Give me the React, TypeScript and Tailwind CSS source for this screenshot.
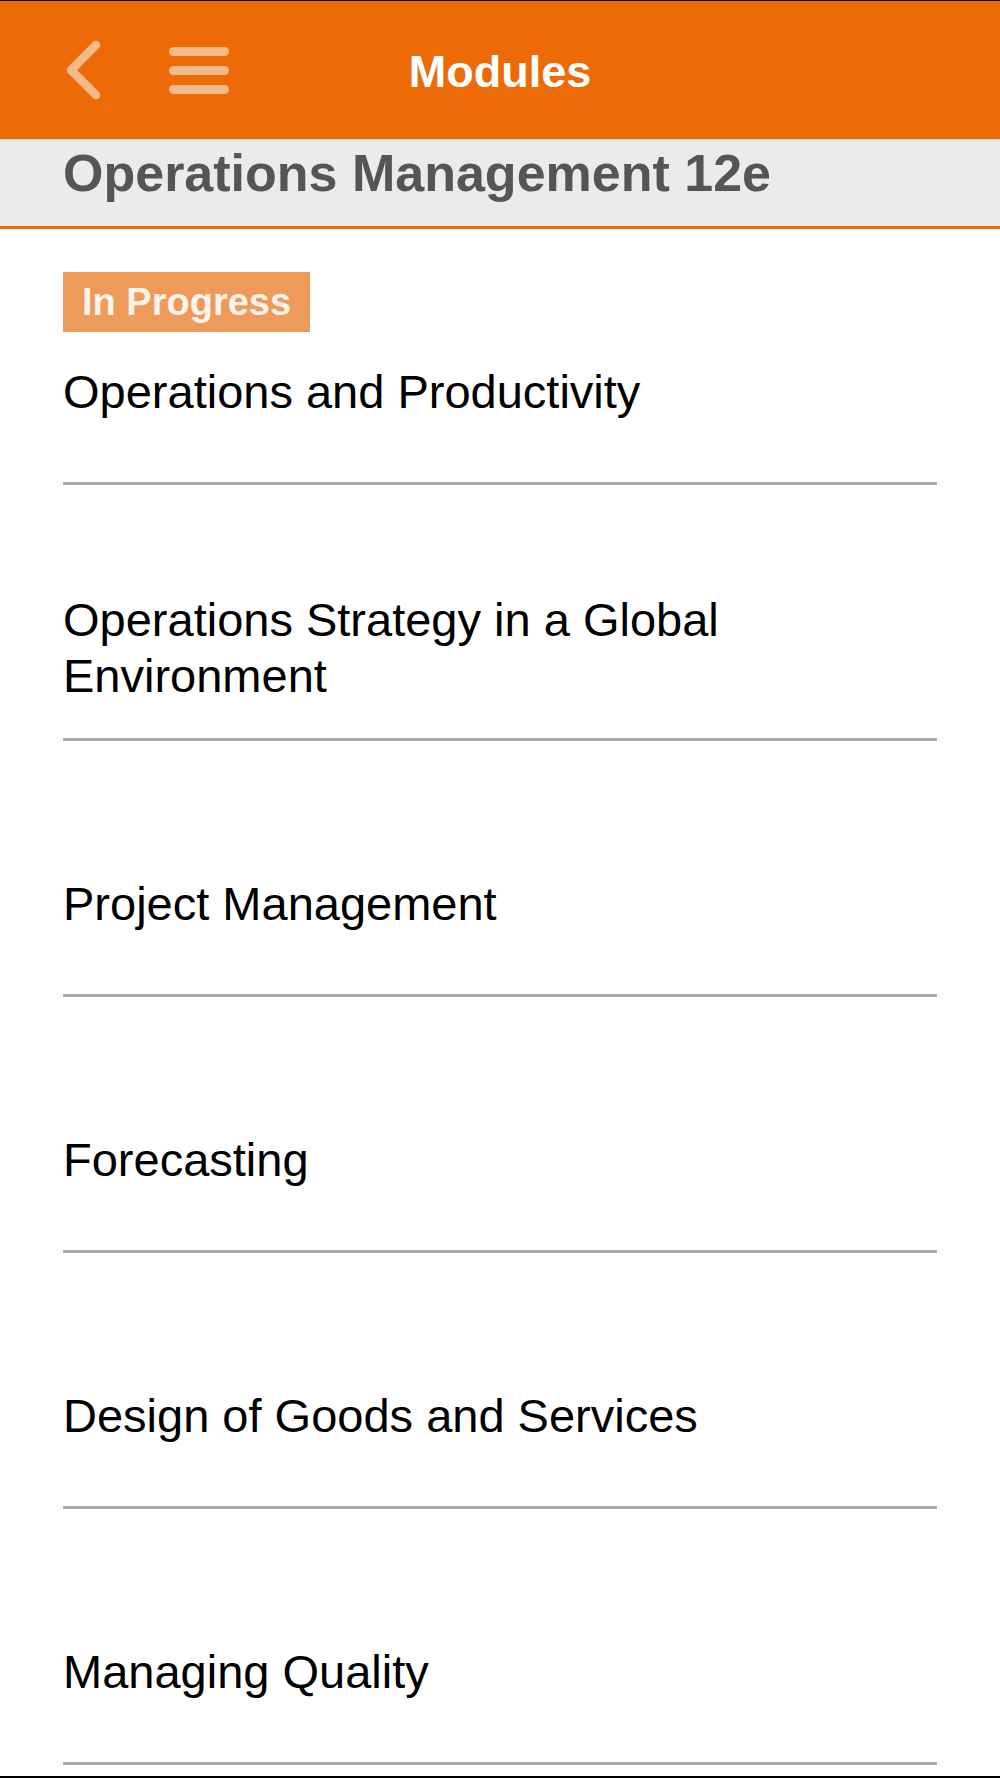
import React from "react";

// Module rows
const modules = [
  { title: "Operations and Productivity", status: "In Progress" },
  { title: "Operations Strategy in a Global Environment" },
  { title: "Project Management" },
  { title: "Forecasting" },
  { title: "Design of Goods and Services" },
  { title: "Managing Quality" },
];

const BackIcon = () => (
  <svg width="40" height="60" viewBox="0 0 40 60" fill="none">
    <path
      d="M33 5 L8 30 L33 55"
      stroke="#F6B98A"
      strokeWidth="8.5"
      strokeLinecap="round"
      strokeLinejoin="round"
    />
  </svg>
);

const MenuIcon = () => (
  <div className="flex flex-col gap-[10px] w-[60px]">
    <span className="block h-[9px] rounded-full bg-[#F6B98A]" />
    <span className="block h-[9px] rounded-full bg-[#F6B98A]" />
    <span className="block h-[9px] rounded-full bg-[#F6B98A]" />
  </div>
);

const App = () => {
  return (
    <main
      className="w-[1000px] h-[1778px] bg-white overflow-hidden flex flex-col border-t border-black border-b-2"
      style={{ fontFamily: '"Liberation Sans", Arial, sans-serif' }}
    >
      {/* Top bar */}
      <header className="relative h-[138px] bg-[#EC6B07] flex items-center shrink-0">
        <div className="flex items-center pl-[63px] gap-[66px]">
          <BackIcon />
          <MenuIcon />
        </div>
        <h1 className="absolute left-0 right-0 top-[45px] text-center text-white text-[45px] font-bold leading-[52px]">
          Modules
        </h1>
      </header>

      {/* Book title */}
      <div className="h-[90px] shrink-0 bg-[#EBEBEB] border-t border-[#d8d8d8] border-b-[3px] border-b-[#EC6B07] px-[63px] flex items-start pt-[3px]">
        <h2 className="text-[52px] font-bold text-[#555555] leading-[60px]">
          Operations Management 12e
        </h2>
      </div>

      {/* Module list */}
      <ul className="flex flex-col">
        {modules.map((m, i) => (
          <li key={i} className="px-[63px]">
            <div className="h-[253px] flex flex-col pt-[43px] pb-[30px]">
              <div className="h-[60px]">
                {m.status && (
                  <span className="inline-flex items-center h-[60px] px-[19px] bg-[#EE9A5A] text-[#FAF3EC] text-[38px] font-bold leading-none">
                    {m.status}
                  </span>
                )}
              </div>
              <div className="flex-1 flex items-center">
                <p className="text-[47px] leading-[56px] text-black pr-[200px]">
                  {m.title}
                </p>
              </div>
            </div>
            <div className="h-[3px] bg-[#AAAAAA]" />
          </li>
        ))}
      </ul>
    </main>
  );
};

export default App;
